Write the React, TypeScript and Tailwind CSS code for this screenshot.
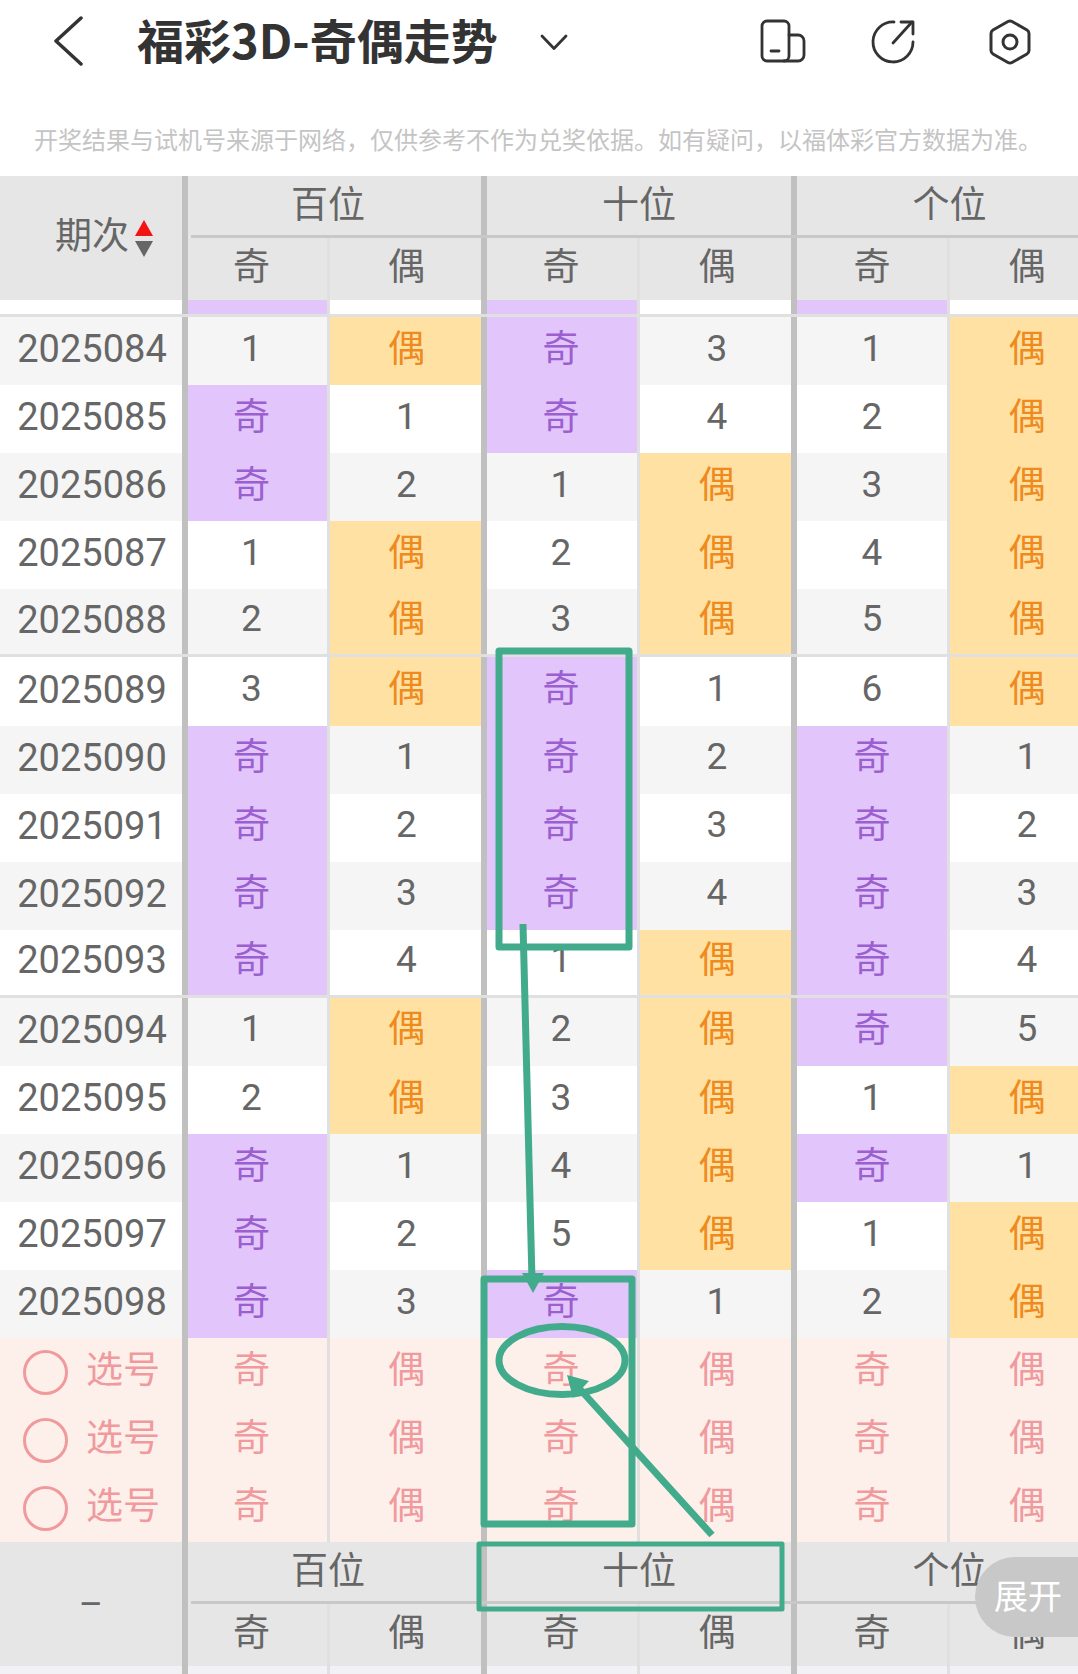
const rows = [
  ["2025084", "1", "偶", "奇", "3", "1", "偶"],
  ["2025085", "奇", "1", "奇", "4", "2", "偶"],
  ["2025086", "奇", "2", "1", "偶", "3", "偶"],
  ["2025087", "1", "偶", "2", "偶", "4", "偶"],
  ["2025088", "2", "偶", "3", "偶", "5", "偶"],
  ["2025089", "3", "偶", "奇", "1", "6", "偶"],
  ["2025090", "奇", "1", "奇", "2", "奇", "1"],
  ["2025091", "奇", "2", "奇", "3", "奇", "2"],
  ["2025092", "奇", "3", "奇", "4", "奇", "3"],
  ["2025093", "奇", "4", "1", "偶", "奇", "4"],
  ["2025094", "1", "偶", "2", "偶", "奇", "5"],
  ["2025095", "2", "偶", "3", "偶", "1", "偶"],
  ["2025096", "奇", "1", "4", "偶", "奇", "1"],
  ["2025097", "奇", "2", "5", "偶", "1", "偶"],
  ["2025098", "奇", "3", "奇", "1", "2", "偶"],
];

// widths + separators of the six value columns, last one runs off the screen
const cols = [
  "w-[142px] pr-[12px] pb-[4px] border-r-[3px] border-[#e0e0e0]",
  "w-[157px] pl-[2px] pb-[4px] border-r-[6px] border-[#c0c0c0]",
  "w-[153px] pr-[2px] pb-[4px] border-r-[3px] border-[#e0e0e0]",
  "w-[157px] pl-[3px] pb-[4px] border-r-[6px] border-[#c0c0c0]",
  "w-[153px] pb-[4px] border-r-[3px] border-[#e0e0e0]",
  "w-[152px] pl-[2px] pb-[4px]",
];

const labels = ["奇", "偶", "奇", "偶", "奇", "偶"];

function Cell({ value, col }: { value: string; col: number }) {
  let tone = "text-[#666666]";
  let lift = "mb-[2px]"; // digits sit a little lower than the hanzi
  if (value === "奇") {
    tone = "bg-[#e2c6fb] text-[#9b5fd0]";
    lift = "";
  }
  if (value === "偶") {
    tone = "bg-[#ffe2a3] text-[#ef8a1f]";
    lift = "";
  }
  return (
    <div className={`shrink-0 h-full flex items-center justify-center ${cols[col]} ${tone}`}>
      <span className={lift}>{value}</span>
    </div>
  );
}

function LabelCells() {
  return (
    <>
      {labels.map((label, i) => (
        <div key={i} className={`shrink-0 h-full flex items-center justify-center ${cols[i]}`}>
          {label}
        </div>
      ))}
    </>
  );
}

function GroupColumns() {
  return (
    <div className="flex flex-col">
      <div className="flex h-[62px] border-b-[3px] border-[#c8c8c8] ml-[3px]">
        <div className="shrink-0 w-[296px] pr-[16px] border-r-[6px] border-[#c0c0c0] flex items-center justify-center">百位</div>
        <div className="shrink-0 w-[310px] border-r-[6px] border-[#c0c0c0] flex items-center justify-center">十位</div>
        <div className="shrink-0 w-[305px] flex items-center justify-center">个位</div>
      </div>
      <div className="flex h-[62px]">
        <LabelCells />
      </div>
    </div>
  );
}

export default function App() {
  return (
    <div className="relative w-[1078px] h-[1674px] overflow-hidden bg-white [font-family:Roboto,'Noto_Sans_CJK_SC',sans-serif] text-[37px] leading-none">
      {/* top bar */}
      <div className="h-[82px] flex items-center">
        <svg className="ml-[52px] shrink-0" width="34" height="50" viewBox="0 0 34 50" fill="none" stroke="#333" strokeWidth="3.5" strokeLinecap="round" strokeLinejoin="round">
          <path d="M29 2 L4 25 L29 48" />
        </svg>
        <h1 className="ml-[51px] mb-[6px] text-[47px] font-bold text-[#333333] whitespace-nowrap [font-family:'Noto_Sans_CJK_SC',sans-serif]">
          福彩3D-奇偶走势
        </h1>
        <svg className="ml-[42px] mt-[2px] shrink-0" width="28" height="17" viewBox="0 0 28 17" fill="none" stroke="#333" strokeWidth="2.8" strokeLinecap="round" strokeLinejoin="round">
          <path d="M2 2 L14 14.5 L26 2" />
        </svg>
        <div className="ml-auto mr-[45px] flex items-center">
          <svg width="46" height="44" viewBox="0 0 46 44" fill="none" stroke="#333" strokeWidth="2.8" strokeLinecap="round" strokeLinejoin="round">
            <rect x="2" y="2" width="27" height="40" rx="5" />
            <path d="M29 16 H38 A6 6 0 0 1 44 22 V36 A6 6 0 0 1 38 42 H24" />
            <path d="M11 32 H19" />
          </svg>
          <svg className="ml-[65px] mt-[2px]" width="46" height="46" viewBox="0 0 46 46" fill="none" stroke="#333" strokeWidth="2.8" strokeLinecap="round" strokeLinejoin="round">
            <path d="M23 3 A20 20 0 1 0 42 23" />
            <path d="M22 24 L41 3" />
            <path d="M30 3 H42 V15" />
          </svg>
          <svg className="ml-[70px] mt-[2px]" width="46" height="46" viewBox="0 0 46 46" fill="none" stroke="#333" strokeWidth="3" strokeLinecap="round" strokeLinejoin="round">
            <path d="M21 2.5 a4 4 0 0 1 4 0 L40 11 a4 4 0 0 1 2 3.4 V31.6 a4 4 0 0 1 -2 3.4 L25 43.5 a4 4 0 0 1 -4 0 L6 35 a4 4 0 0 1 -2 -3.4 V14.4 a4 4 0 0 1 2 -3.4 Z" />
            <circle cx="23" cy="23" r="7" />
          </svg>
        </div>
      </div>

      <div className="h-[94px] pt-[45px] pl-[34px]">
        <p className="text-[24px] text-[#c4c4c4] whitespace-nowrap [font-family:'Noto_Sans_CJK_SC',sans-serif]">
          开奖结果与试机号来源于网络，仅供参考不作为兑奖依据。如有疑问，以福体彩官方数据为准。
        </p>
      </div>

      {/* trend table */}
      <div className="flex h-[124px] bg-[#e6e6e6] text-[#666666]">
        <div className="shrink-0 w-[188px] border-r-[6px] border-[#c0c0c0] flex items-center pl-[55px]">
          <span className="mb-[4px]">期次</span>
          <span className="ml-[6px] flex flex-col gap-[5px]">
            <span className="block w-0 h-0 border-x-[9px] border-x-transparent border-b-[16px] border-b-[#f01414]" />
            <span className="block w-0 h-0 border-x-[9px] border-x-transparent border-t-[16px] border-t-[#666666]" />
          </span>
        </div>
        <GroupColumns />
      </div>
      <div className="flex h-[17px] border-b-[3px] border-[#e0e0e0]">
        <div className="shrink-0 w-[188px] border-r-[6px] border-[#c0c0c0]" />
        {labels.map((label, i) => (
          <div key={i} className={`shrink-0 h-full ${cols[i]} ${label === "奇" ? "bg-[#e2c6fb]" : ""}`} />
        ))}
      </div>

      {rows.map((row, idx) => (
        <div
          key={row[0]}
          className={`flex h-[68.1px] ${idx % 2 === 0 ? "bg-[#f5f5f5]" : "bg-white"} ${idx === 4 || idx === 9 ? "border-b-[3px] border-[#e0e0e0]" : ""}`}
        >
          <div className="shrink-0 w-[188px] h-full pb-[4px] pl-[2px] border-r-[6px] border-[#c0c0c0] flex items-center justify-center text-[#666666] text-[38px]">
            {row[0]}
          </div>
          {row.slice(1).map((value, i) => (
            <Cell key={i} value={value} col={i} />
          ))}
        </div>
      ))}

      {[0, 1, 2].map((r) => (
        <div key={r} className="flex h-[68px] bg-[#fdf0eb] text-[#f09a9e]">
          <div className="shrink-0 w-[188px] h-full border-r-[6px] border-[#c0c0c0] flex items-center pl-[23px]">
            <span className="shrink-0 w-[45px] h-[45px] rounded-full border-[3px] border-[#f09a9e]" />
            <span className="ml-[18px] mb-[3px]">选号</span>
          </div>
          <LabelCells />
        </div>
      ))}

      {/* repeated head at the bottom */}
      <div className="flex h-[124px] bg-[#e6e6e6] text-[#666666]">
        <div className="shrink-0 w-[188px] border-r-[6px] border-[#c0c0c0] flex items-center justify-center">–</div>
        <GroupColumns />
      </div>
      <div className="flex h-[10px] bg-[#f1f1f6]">
        <div className="shrink-0 w-[188px] border-r-[6px] border-[#c0c0c0]" />
        {labels.map((label, i) => (
          <div key={i} className={`shrink-0 h-full ${cols[i]}`} />
        ))}
      </div>

      {/* hand drawn green marks on top of the table */}
      <svg className="absolute left-0 top-0 pointer-events-none" width="1078" height="1674" viewBox="0 0 1078 1674" fill="none" stroke="#42ab8c" strokeWidth="7" strokeLinejoin="round">
        <rect x="499" y="651" width="130" height="296" />
        <path d="M523 924 L532 1280" />
        <path d="M522 1273 H544 L533 1293 Z" fill="#42ab8c" stroke="none" />
        <rect x="484" y="1279" width="148" height="245" />
        <ellipse cx="562" cy="1360.5" rx="63" ry="34" />
        <path d="M712 1535 L578 1387" />
        <path d="M567 1375 L589 1381 L573 1398 Z" fill="#42ab8c" stroke="none" />
        <rect x="479" y="1544" width="303" height="65" strokeWidth="5" />
      </svg>

      <div className="absolute left-[975px] top-[1557px] w-[130px] h-[80px] pb-[4px] rounded-l-full bg-[#c8c8c8] text-white text-[34px] flex items-center pl-[19px] whitespace-nowrap [font-family:'Noto_Sans_CJK_SC',sans-serif]">
        展开
      </div>
    </div>
  );
}
